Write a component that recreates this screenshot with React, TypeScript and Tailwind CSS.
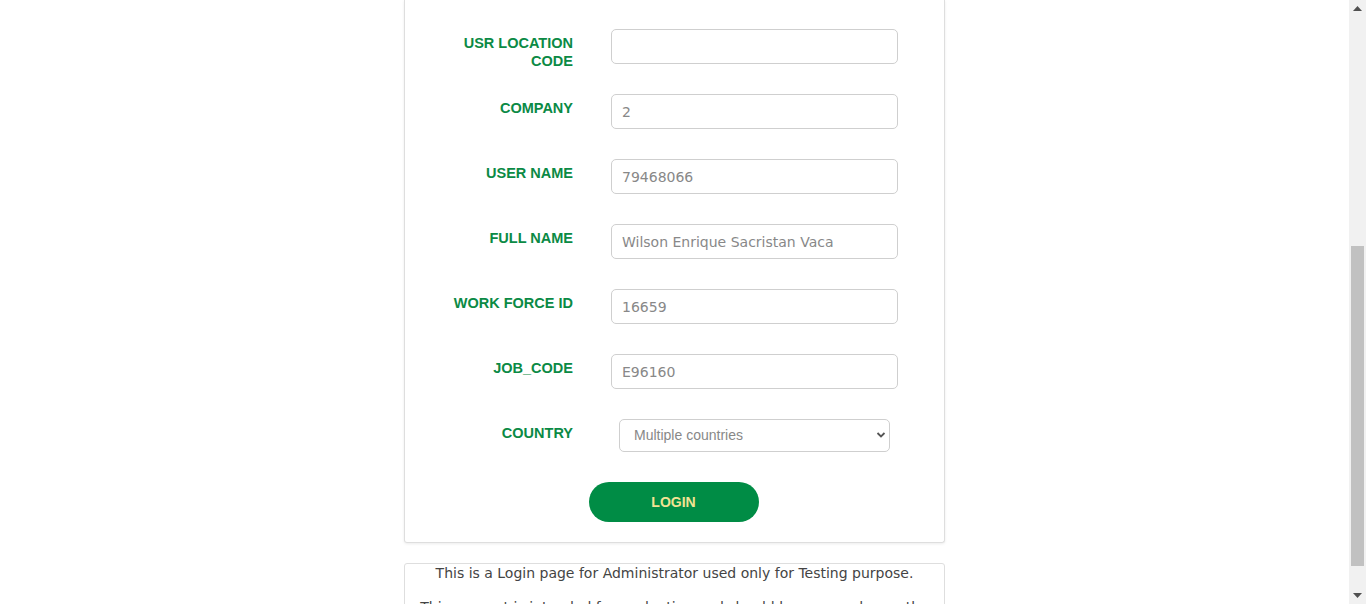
import React from 'react';

const fields = [
  { label: 'USR LOCATION CODE', value: '' },
  { label: 'COMPANY', value: '2' },
  { label: 'USER NAME', value: '79468066' },
  { label: 'FULL NAME', value: 'Wilson Enrique Sacristan Vaca' },
  { label: 'WORK FORCE ID', value: '16659' },
  { label: 'JOB_CODE', value: 'E96160' },
];

const labelCls =
  "w-[130px] shrink-0 pt-[5px] text-right text-[14.5px] leading-[18px] font-bold text-[#0b8a45] font-['Liberation_Sans',Arial,sans-serif]";

const App: React.FC = () => {
  return (
    <div className="flex h-[604px] w-full overflow-hidden bg-white">
      <div className="flex-1 flex flex-col items-center">
        {/* login form card, top edge scrolled out of view */}
        <div className="w-[541px] border-x border-b border-[#dedede] rounded-b-[3px] shadow-[0_1px_3px_rgba(0,0,0,0.08)] pt-[29px] pb-[20px] pl-[38px]">
          {fields.map((f) => (
            <div key={f.label} className="flex items-start h-[35px] mb-[30px]">
              <div className={labelCls}>{f.label}</div>
              <input
                readOnly
                value={f.value}
                className="ml-[38px] w-[287px] h-[35px] border border-[#cfcfcf] rounded-[5px] px-[10px] text-[14px] text-[#888] font-['DejaVu_Sans',Verdana,sans-serif] outline-none"
              />
            </div>
          ))}

          <div className="flex items-start">
            <div className={labelCls}>COUNTRY</div>
            <div className="relative ml-[46px] w-[271px] h-[33px]">
              <select
                defaultValue="multi"
                className="appearance-none w-full h-full border border-[#cfcfcf] rounded-[5px] pl-[14px] text-[14px] text-[#888] bg-white font-['Liberation_Sans',Arial,sans-serif] outline-none"
              >
                <option value="multi">Multiple countries</option>
              </select>
              <svg
                className="absolute right-[4px] top-[12px] pointer-events-none"
                width="10"
                height="8"
                viewBox="0 0 10 8"
              >
                <path d="M1.5 2 L5 5.5 L8.5 2" fill="none" stroke="#555" strokeWidth="1.8" />
              </svg>
            </div>
          </div>

          <div className="flex justify-center mt-[30px] pr-[40px]">
            <button className="w-[170px] h-[40px] rounded-full bg-[#008c45] text-[#f2e394] text-[14px] font-bold font-['Liberation_Sans',Arial,sans-serif]">
              LOGIN
            </button>
          </div>
        </div>

        {/* info card */}
        <div className="mt-[20px] w-[541px] border border-[#dedede] rounded-t-[3px] pt-[1px] px-[4px] text-center text-[14px] leading-[17px] text-[#444] font-['DejaVu_Sans',Verdana,sans-serif]">
          <p className="mb-[17px]">This is a Login page for Administrator used only for Testing purpose.</p>
          <p>This account is intended for evaluation and should be removed once the tests are finished.</p>
        </div>
      </div>

      {/* scrollbar */}
      <div className="w-[17px] shrink-0 bg-[#f1f1f1] flex flex-col items-center">
        <div className="h-[17px] flex items-center justify-center">
          <svg width="9" height="5" viewBox="0 0 9 5">
            <path d="M0 5 L4.5 0 L9 5 Z" fill="#505050" />
          </svg>
        </div>
        <div className="flex-1 w-full px-[2px] pt-[229px]">
          <div className="h-[320px] w-full bg-[#c1c1c1]" />
        </div>
        <div className="h-[17px] flex items-center justify-center">
          <svg width="9" height="5" viewBox="0 0 9 5">
            <path d="M0 0 L4.5 5 L9 0 Z" fill="#505050" />
          </svg>
        </div>
      </div>
    </div>
  );
};

export default App;
